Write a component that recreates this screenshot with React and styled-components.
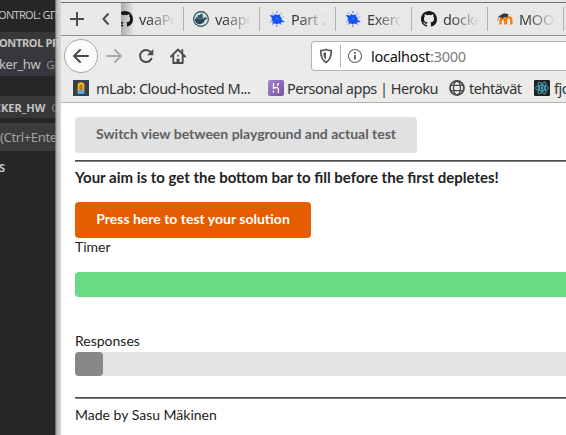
import React from "react";
import styled, { createGlobalStyle } from "styled-components";

const GlobalStyle = createGlobalStyle`
  * { box-sizing: border-box; }
  html, body { margin: 0; padding: 0; overflow: hidden; }
  svg { display: block; flex: none; }
`;

const Desktop = styled.div`
  display: flex;
  width: 566px;
  height: 435px;
  overflow: hidden;
  background: #262626;
`;

/* Editor side bar */
const Sidebar = styled.aside`
  width: 61px;
  flex: none;
  overflow: hidden;
  font-family: "Noto Sans", sans-serif;
  color: #c4c4c4;
  background: #262626;
`;
const SideRow = styled.div`
  display: flex;
  align-items: center;
  height: ${(p) => p.$h}px;
  margin-top: ${(p) => p.$gap || 0}px;
  text-indent: ${(p) => p.$x || 0}px;
  background: ${(p) => p.$bg || "transparent"};
  font-size: ${(p) => p.$size || 11}px;
  font-weight: ${(p) => (p.$bold ? 700 : 400)};
  letter-spacing: ${(p) => p.$ls || 0}px;
  color: ${(p) => p.$color || "#c4c4c4"};
  white-space: pre;
`;
const Muted = styled.span`
  margin-left: 6px;
  color: #8b8b8e;
  font-size: 11.5px;
  font-weight: 400;
  text-indent: 0;
`;
/* Translucent frame lying over the side bar's right edge */
const WindowEdge = styled.div`
  position: relative;
  width: 6px;
  flex: none;
  margin-left: -6px;
  background: linear-gradient(90deg, #5b5b5bd0 0, #a6a6a6d8 1px, #cfcfcfe0 2px, #dcdcdce4 4px, #e6e6e6ec 6px);
`;

/* Browser */
const Browser = styled.main`
  display: flex;
  flex-direction: column;
  width: 505px;
  flex: none;
  overflow: hidden;
  background: #fff;
  font-family: "Noto Sans", sans-serif;
`;
const TabBar = styled.div`
  display: flex;
  height: 36px;
  flex: none;
  padding-top: 1px;
  border-top: 2px solid #e8e8e7;
  border-bottom: 1px solid #8f8f8f;
  background: linear-gradient(#707070 0 1px, #e8e8e7 1px);
  background-clip: padding-box;
`;
const TabControls = styled.div`
  display: flex;
  align-items: center;
  width: 60px;
  flex: none;
  padding: 0 0 0 9px;
  gap: 17px;
  background: #e8e8e7;
`;
const TabStrip = styled.div`
  display: flex;
  align-items: center;
  flex: 1;
  overflow: hidden;
  background: linear-gradient(90deg, #aaa 0, #e8e8e7 13px);
`;
const Tab = styled.div`
  display: flex;
  align-items: center;
  width: 76px;
  height: 24px;
  flex: none;
  margin-left: ${(p) => p.$shift || 0}px;
  padding-left: 9px;
  gap: 6px;
  border-right: 1px solid #b0b0b0;
`;
const TabTitle = styled.span`
  width: 36px;
  overflow: hidden;
  white-space: nowrap;
  font-size: 14.5px;
  line-height: 22px;
  letter-spacing: -0.3px;
  color: #36393c;
  mask-image: linear-gradient(90deg, #000 8px, transparent 36px);
`;
const NavBar = styled.div`
  display: flex;
  align-items: center;
  height: 38px;
  flex: none;
  padding: 2px 0 0 3px;
  background: #ebebea;
`;
const BackButton = styled.div`
  display: flex;
  align-items: center;
  justify-content: center;
  width: 34px;
  height: 34px;
  flex: none;
  border: 1px solid #a9a9a9;
  border-radius: 50%;
  background: #fbfbfb;
`;
const NavIcon = styled.div`
  display: flex;
  align-items: center;
  justify-content: center;
  width: 32px;
  flex: none;
`;
const UrlBar = styled.div`
  display: flex;
  align-items: center;
  height: 30px;
  flex: 1;
  margin-left: 117px;
  padding-left: 6px;
  border: 1px solid #b4b4b1;
  border-right: 0;
  border-radius: 4px 0 0 4px;
  background: #fff;
`;
const UrlDivider = styled.i`
  width: 1px;
  height: 22px;
  margin: 0 6px;
  background: #b5b5b5;
`;
const Url = styled.span`
  margin-left: 8px;
  padding-bottom: 1px;
  font-size: 14.5px;
  letter-spacing: -0.25px;
  color: #101010;
  em { font-style: normal; color: #7c7c7c; }
`;
const Bookmarks = styled.div`
  display: flex;
  height: 29px;
  flex: none;
  padding: 0 0 1px 12px;
  border-bottom: 1px solid #b2b2ae;
  background: #ebebea;
`;
const Bookmark = styled.div`
  display: flex;
  align-items: center;
  width: ${(p) => p.$w}px;
  flex: none;
  gap: ${(p) => p.$gap || 4}px;
  font-size: 14.5px;
  letter-spacing: -0.49px;
  color: #303436;
  white-space: nowrap;
`;

/* Page */
const Page = styled.section`
  display: flex;
  flex-direction: column;
  align-items: flex-start;
  flex: 1;
  padding: 14px 0 0 14px;
  font: 14px/20px Lato, sans-serif;
  color: #222;
`;
const Button = styled.button`
  width: ${(p) => p.$w}px;
  height: 36px;
  flex: none;
  padding: 0 0 3px;
  border: 0;
  border-radius: 4px;
  background: ${(p) => (p.$primary ? "#e65c00" : "#e0e1e2")};
  color: ${(p) => (p.$primary ? "#fff" : "#606060")};
  font: 700 14px/14px Lato, sans-serif;
`;
const Rule = styled.hr`
  width: 100%;
  height: 2px;
  flex: none;
  margin: ${(p) => p.$top}px 0 0;
  border: 0;
  background: linear-gradient(#4d4d4f 50%, #808080 50%);
`;
const Heading = styled.h1`
  height: 20px;
  margin: 5px 0 15px;
  font-size: 15px;
  line-height: 20px;
  font-weight: 700;
  white-space: nowrap;
`;
const Label = styled.div`
  height: 20px;
  margin-top: ${(p) => p.$top || 0}px;
`;
const Track = styled.div`
  width: 100%;
  height: ${(p) => p.$h}px;
  flex: none;
  margin-top: ${(p) => p.$top || 0}px;
  border-radius: 4px 0 0 4px;
  background: #e4e4e4;
`;
const Fill = styled.div`
  width: ${(p) => p.$w};
  height: 100%;
  border-radius: ${(p) => (p.$w === "100%" ? "4px 0 0 4px" : "4px")};
  background: ${(p) => p.$color};
`;

const Github = () => (
  <svg width="16" height="16" viewBox="0 0 16 16" fill="#15171a">
    <path d="M8 0C3.58 0 0 3.58 0 8c0 3.54 2.29 6.53 5.47 7.59.4.07.55-.17.55-.38 0-.19-.01-.82-.01-1.49-2.01.37-2.53-.49-2.69-.94-.09-.23-.48-.94-.82-1.13-.28-.15-.68-.52-.01-.53.63-.01 1.08.58 1.23.82.72 1.21 1.87.87 2.33.66.07-.52.28-.87.51-1.07-1.78-.2-3.64-.89-3.64-3.95 0-.87.31-1.59.82-2.15-.08-.2-.36-1.02.08-2.12 0 0 .67-.21 2.2.82a7.6 7.6 0 0 1 4 0c1.53-1.04 2.2-.82 2.2-.82.44 1.1.16 1.92.08 2.12.51.56.82 1.27.82 2.15 0 3.07-1.87 3.75-3.65 3.95.29.25.54.73.54 1.48 0 1.07-.01 1.93-.01 2.2 0 .21.15.46.55.38A8.01 8.01 0 0 0 16 8c0-4.42-3.58-8-8-8z" />
  </svg>
);
const Docker = () => (
  <svg width="16" height="16" viewBox="0 0 16 16">
    <circle cx="8" cy="8" r="7.4" fill="#d5dfe4" stroke="#27485d" strokeWidth="1.1" />
    <path d="M1.800 7.600h9.400c.3-.8.1-1.500.7-2.100.7.4.9 1 .8 1.600.6 0 1.200.1 1.500.4-.4.8-1.300 1.100-2 1.100C11.300 11.500 9.300 13.200 6.500 13.200 3.500 13.200 1.800 11.200 1.800 7.600z" fill="#27485d" />
    <path d="M3.200 5.700h6.700v1.900H3.200zM4.900 4.100h4.700v1.600H4.900zM7.400 2.700h2.200v1.500H7.400z" fill="#2f566c" />
  </svg>
);
const Burst = () => (
  <svg width="16" height="16" viewBox="0 0 16 16" fill="#1554f5">
    <path d="M.6 4.100l4.200.4 1.600-1.600 1.700 1 2.800-.5.600 2.300 1.200 1.600-.2 1.200 3.400 2.400-3.500.3-.8 1.800-2.200-.4-1.800 1-1.500-1.200-2.700.300.400-2.400L2.200 8.900l1-1.500z" />
    <path d="M7.200.2h1.400v1.500H7.200zM7.200 14.300h1.400v1.500H7.200z" opacity=".75" />
    <path d="M2.900 1.800h1.400v1.400H2.900zM11.500 1.800h1.400v1.400h-1.400zM1.100 10h1.400v1.400H1.100zM2.900 12.700h1.400v1.400H2.900zM11.700 12.700h1.400v1.400h-1.400zM13.300 5.500h1.300v1.300h-1.300z" opacity=".45" />
    <path d="M7 7.800h1.600" stroke="#5d8aff" strokeWidth="1.200" />
  </svg>
);
const Moodle = () => (
  <svg width="16" height="16" viewBox="0 0 16 16" fill="none">
    <path d="M3.600 13.500V9.700c0-2.700 4.700-2.700 4.700 0v3.800M8.900 13.500V9.300c0-3.600 5.400-3.600 5.400 0v4.200" stroke="#f98012" strokeWidth="2.500" />
    <path d="M1.200 5.500L7 2.200l4.600 1.100-1.200 3.200c-1.700-.6-3.500-.5-5.200.9z" fill="#393532" />
    <path d="M1.800 5.300L.8 9.800" stroke="#8a6f5e" strokeWidth=".8" />
  </svg>
);
const MLab = () => (
  <svg width="16" height="16" viewBox="0 0 16 16">
    <path fill="#35414d" d="M0 0h16v16H0z" />
    <path d="M4.600 11V5.700a3.400 3.400 0 0 1 6.800 0V11z" fill="#f6b519" />
    <path d="M7 10.500V6a1 1 0 0 1 2 0v4.500" fill="#d99811" stroke="#544b35" strokeWidth=".6" />
    <path d="M4.600 10.500h2l1.400-1 1.400 1h2V14H4.600z" fill="#5ba9df" />
  </svg>
);
const Heroku = () => (
  <svg width="16" height="16" viewBox="0 0 16 16">
    <defs>
      <linearGradient id="heroku" x2="1" y2="1">
        <stop stopColor="#a584c9" />
        <stop offset="1" stopColor="#7253a1" />
      </linearGradient>
    </defs>
    <rect width="16" height="16" rx="2" fill="url(#heroku)" />
    <path d="M5.500 3v5.300c1.500-.8 4.900-1.500 4.900.4V13M10.500 3c0 1.200-.5 2-1.200 2.700" stroke="#fff" strokeWidth="1.300" fill="none" />
    <path d="M4.900 10.300L6.600 11.700l-1.700 1.500z" fill="#fff" />
  </svg>
);
const Globe = () => (
  <svg width="16" height="16" viewBox="0 0 16 16" fill="none" stroke="#484b4d" strokeWidth="1.300">
    <circle cx="8" cy="8" r="7" strokeWidth="1.800" />
    <ellipse cx="8" cy="8" rx="3.500" ry="7" />
    <path d="M1.500 5.300h13M1.500 10.700h13" />
  </svg>
);
const ReactLogo = () => (
  <svg width="16" height="16" viewBox="0 0 16 16" fill="none" stroke="#53c1de" strokeWidth=".8">
    <rect width="16" height="16" rx="1" fill="#222" stroke="none" />
    <ellipse cx="8" cy="8" rx="6.500" ry="2.500" />
    <ellipse cx="8" cy="8" rx="6.500" ry="2.500" transform="rotate(60 8 8)" />
    <ellipse cx="8" cy="8" rx="6.500" ry="2.500" transform="rotate(120 8 8)" />
    <circle cx="8" cy="8" r="1.300" fill="#53c1de" stroke="none" />
  </svg>
);
const Arrow = ({ color, flip }) => (
  <svg width="16" height="16" viewBox="0 0 16 16" fill="none" stroke={color} strokeWidth="2" strokeLinecap="round" strokeLinejoin="round">
    <path d={flip ? "M1 8h13.500M9 2l6 6-6 6" : "M15 8H1.500M7 2L1 8l6 6"} />
  </svg>
);
const Reload = () => (
  <svg width="16" height="16" viewBox="0 0 16 16">
    <path d="M12.700 4.200A6 6 0 1 0 13.400 10.700" fill="none" stroke="#4a4d4f" strokeWidth="2" strokeLinecap="round" />
    <path d="M15.300.9v6.300H9z" fill="#4a4d4f" />
  </svg>
);
const Home = () => (
  <svg width="16" height="16" viewBox="0 0 16 16" fill="none" stroke="#4a4d4f" strokeWidth="1.900" strokeLinecap="round" strokeLinejoin="round">
    <path d="M1 8.500l7-7 7 7M3.300 7.500V15h9.400V7.500" />
    <path d="M8 14v-3.200" strokeWidth="3" strokeLinecap="butt" />
    <path d="M8 7.600v.1" strokeWidth="1.700" />
    <path d="M12.300 2v2" />
  </svg>
);
const Shield = () => (
  <svg width="16" height="16" viewBox="0 0 16 16">
    <path d="M8 1.500c1.800.8 3.500 1.100 5.300 1.200 0 6.300-1.200 9.300-5.300 11.800-4.100-2.500-5.300-5.500-5.300-11.800C4.500 2.600 6.200 2.300 8 1.500z" fill="none" stroke="#555759" strokeWidth="1.700" strokeLinejoin="round" />
    <path d="M8 4.300v7.400c-2-1.700-2.600-3.500-2.700-6.700z" fill="#555759" />
  </svg>
);
const Info = () => (
  <svg width="16" height="16" viewBox="0 0 16 16" fill="none" stroke="#666">
    <circle cx="8" cy="8" r="6.500" strokeWidth="1.100" />
    <path d="M8 7v4.600M8 4v1.700" strokeWidth="1.900" />
  </svg>
);

export default function App() {
  return (
    <>
      <GlobalStyle />
      <Desktop>
        <Sidebar>
          <SideRow $h={20} $gap={4} $x={-2} $ls={-0.7}>ONTROL: GIT</SideRow>
          <SideRow $h={20} $gap={8} $x={-1} $ls={-0.35} $bg="#38383a" $bold>ONTROL PR</SideRow>
          <SideRow $h={24} $bg="#37373d" $size={13} $x={-1} $ls={-0.4}>ker_hw<Muted>Git</Muted></SideRow>
          <SideRow $h={22} $gap={20} $x={-6} $bg="#38383a" $bold>CKER_HW<Muted>G</Muted></SideRow>
          <SideRow $h={28} $gap={5} $bg="#3b3b3b" $size={13} $ls={-0.35} $color="#a3a3a3">(Ctrl+Ente</SideRow>
          <SideRow $h={22} $gap={5} $x={-1} $bold>S</SideRow>
        </Sidebar>
        <WindowEdge />
        <Browser>
          <TabBar>
            <TabControls>
              <svg width="14" height="14" viewBox="0 0 14 14" stroke="#484c50" strokeWidth="2"><path d="M0 7h14M7 0v14" /></svg>
              <svg width="9" height="14" viewBox="0 0 9 14" fill="none" stroke="#484c50" strokeWidth="2"><path d="M7.500 1.500L2.500 7l5 5.500" /></svg>
            </TabControls>
            <TabStrip>
              <Tab $shift={-13}><Github /><TabTitle>vaaPo</TabTitle></Tab>
              <Tab><Docker /><TabTitle>vaapo</TabTitle></Tab>
              <Tab><Burst /><TabTitle>Part 2</TabTitle></Tab>
              <Tab><Burst /><TabTitle>Exerc</TabTitle></Tab>
              <Tab><Github /><TabTitle>docke</TabTitle></Tab>
              <Tab><Moodle /><TabTitle>MOO</TabTitle></Tab>
            </TabStrip>
          </TabBar>
          <NavBar>
            <BackButton><Arrow color="#45484a" /></BackButton>
            <NavIcon><Arrow color="#aaa" flip /></NavIcon>
            <NavIcon><Reload /></NavIcon>
            <NavIcon><Home /></NavIcon>
            <UrlBar>
              <Shield /><UrlDivider /><Info />
              <Url>localhost<em>:3000</em></Url>
            </UrlBar>
          </NavBar>
          <Bookmarks>
            <Bookmark $w={195} $gap={7}><MLab />mLab: Cloud-hosted M...</Bookmark>
            <Bookmark $w={181} $gap={3}><Heroku />Personal apps | Heroku</Bookmark>
            <Bookmark $w={85}><Globe />tehtävät</Bookmark>
            <Bookmark $w={50}><ReactLogo />fjo</Bookmark>
          </Bookmarks>
          <Page>
            <Button $w={342}>Switch view between playground and actual test</Button>
            <Rule $top={7} />
            <Heading>Your aim is to get the bottom bar to fill before the first depletes!</Heading>
            <Button $w={236} $primary>Press here to test your solution</Button>
            <Label $top={-1}>Timer</Label>
            <Track $h={25} $top={15}><Fill $w="100%" $color="#69db84" /></Track>
            <Label $top={34}>Responses</Label>
            <Track $h={24} $top={1}><Fill $w="28px" $color="#888" /></Track>
            <Rule $top={21} />
            <Label $top={6}>Made by Sasu Mäkinen</Label>
          </Page>
        </Browser>
      </Desktop>
    </>
  );
}
